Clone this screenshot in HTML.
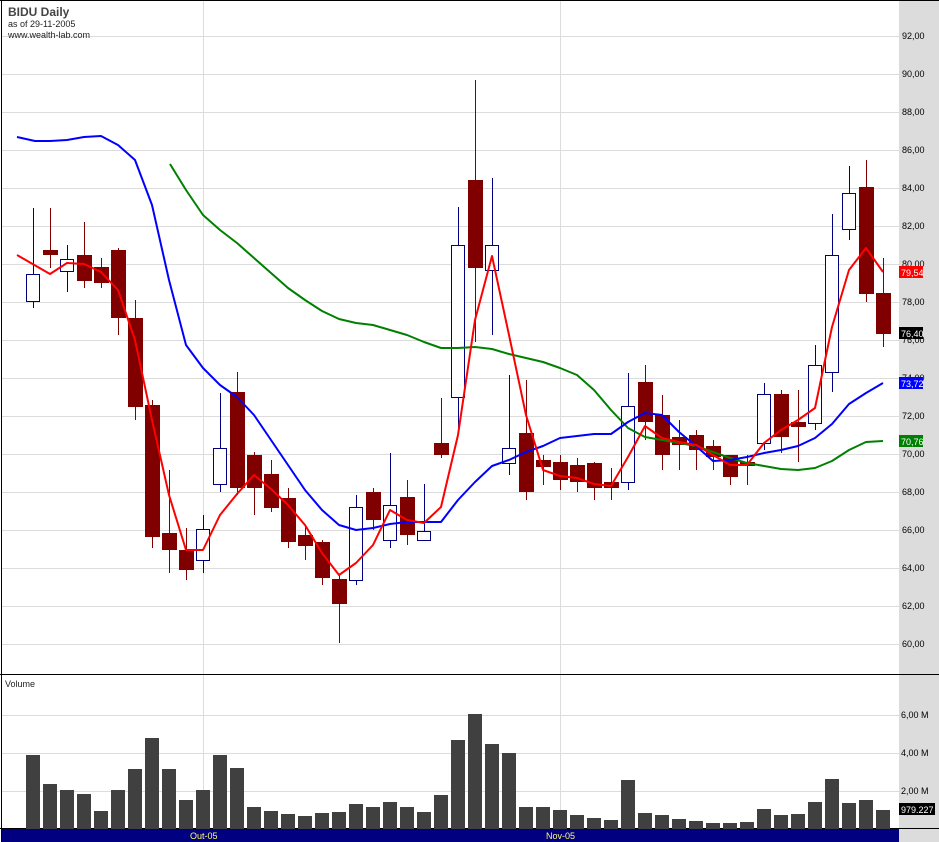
<!DOCTYPE html>
<html><head><meta charset="utf-8"><style>
body{margin:0;background:#fff;}
svg{display:block;font-family:"Liberation Sans",sans-serif;}
</style></head><body>
<svg width="939" height="842" viewBox="0 0 939 842" xmlns="http://www.w3.org/2000/svg" shape-rendering="crispEdges">
<rect x="0" y="0" width="939" height="842" fill="#fff"/>
<rect x="899" y="0" width="40" height="842" fill="#dcdcdc"/>
<g stroke="#dcdcdc" stroke-width="1">
<line x1="2" y1="36.5" x2="899" y2="36.5"/><line x1="2" y1="74.5" x2="899" y2="74.5"/><line x1="2" y1="112.5" x2="899" y2="112.5"/><line x1="2" y1="150.5" x2="899" y2="150.5"/><line x1="2" y1="188.5" x2="899" y2="188.5"/><line x1="2" y1="226.5" x2="899" y2="226.5"/><line x1="2" y1="264.5" x2="899" y2="264.5"/><line x1="2" y1="302.5" x2="899" y2="302.5"/><line x1="2" y1="340.5" x2="899" y2="340.5"/><line x1="2" y1="378.5" x2="899" y2="378.5"/><line x1="2" y1="416.5" x2="899" y2="416.5"/><line x1="2" y1="454.5" x2="899" y2="454.5"/><line x1="2" y1="492.5" x2="899" y2="492.5"/><line x1="2" y1="530.5" x2="899" y2="530.5"/><line x1="2" y1="568.5" x2="899" y2="568.5"/><line x1="2" y1="606.5" x2="899" y2="606.5"/><line x1="2" y1="644.5" x2="899" y2="644.5"/>
<line x1="2" y1="715.5" x2="899" y2="715.5"/><line x1="2" y1="753.5" x2="899" y2="753.5"/><line x1="2" y1="791.5" x2="899" y2="791.5"/>
<line x1="203.5" y1="0" x2="203.5" y2="829"/><line x1="560.5" y1="0" x2="560.5" y2="829"/>
</g>
<line x1="1.5" y1="0" x2="1.5" y2="842" stroke="#000"/>
<line x1="0" y1="0.5" x2="939" y2="0.5" stroke="#000"/>
<line x1="0" y1="674.5" x2="939" y2="674.5" stroke="#000"/>
<line x1="0" y1="828.5" x2="939" y2="828.5" stroke="#000"/>
<text x="8" y="16" font-size="12" font-weight="bold" fill="#444">BIDU Daily</text>
<text x="8" y="27" font-size="9" fill="#222">as of 29-11-2005</text>
<text x="8" y="38" font-size="9" fill="#222">www.wealth-lab.com</text>
<text x="5" y="687" font-size="9" fill="#222">Volume</text>
<g font-size="9" fill="#000">
<text x="902" y="39">92,00</text><text x="902" y="77">90,00</text><text x="902" y="115">88,00</text><text x="902" y="153">86,00</text><text x="902" y="191">84,00</text><text x="902" y="229">82,00</text><text x="902" y="267">80,00</text><text x="902" y="305">78,00</text><text x="902" y="343">76,00</text><text x="902" y="381">74,00</text><text x="902" y="419">72,00</text><text x="902" y="457">70,00</text><text x="902" y="495">68,00</text><text x="902" y="533">66,00</text><text x="902" y="571">64,00</text><text x="902" y="609">62,00</text><text x="902" y="647">60,00</text>
<text x="901" y="718">6,00 M</text><text x="901" y="756">4,00 M</text><text x="901" y="794">2,00 M</text>
</g>
<g id="vol" fill="#404040">
<rect x="26" y="755" width="14" height="74"/><rect x="43" y="784" width="14" height="45"/><rect x="60" y="790" width="14" height="39"/><rect x="77" y="794" width="14" height="35"/><rect x="94" y="811" width="14" height="18"/><rect x="111" y="790" width="14" height="39"/><rect x="128" y="769" width="14" height="60"/><rect x="145" y="738" width="14" height="91"/><rect x="162" y="769" width="14" height="60"/><rect x="179" y="800" width="14" height="29"/><rect x="196" y="790" width="14" height="39"/><rect x="213" y="755" width="14" height="74"/><rect x="230" y="768" width="14" height="61"/><rect x="247" y="807" width="14" height="22"/><rect x="264" y="811" width="14" height="18"/><rect x="281" y="814" width="14" height="15"/><rect x="298" y="816" width="14" height="13"/><rect x="315" y="813" width="14" height="16"/><rect x="332" y="812" width="14" height="17"/><rect x="349" y="804" width="14" height="25"/><rect x="366" y="807" width="14" height="22"/><rect x="383" y="802" width="14" height="27"/><rect x="400" y="807" width="14" height="22"/><rect x="417" y="812" width="14" height="17"/><rect x="434" y="795" width="14" height="34"/><rect x="451" y="740" width="14" height="89"/><rect x="468" y="714" width="14" height="115"/><rect x="485" y="744" width="14" height="85"/><rect x="502" y="753" width="14" height="76"/><rect x="519" y="807" width="14" height="22"/><rect x="536" y="807" width="14" height="22"/><rect x="553" y="810" width="14" height="19"/><rect x="570" y="815" width="14" height="14"/><rect x="587" y="818" width="14" height="11"/><rect x="604" y="820" width="14" height="9"/><rect x="621" y="780" width="14" height="49"/><rect x="638" y="813" width="14" height="16"/><rect x="655" y="815" width="14" height="14"/><rect x="672" y="819" width="14" height="10"/><rect x="689" y="821" width="14" height="8"/><rect x="706" y="823" width="14" height="6"/><rect x="723" y="823" width="14" height="6"/><rect x="740" y="822" width="14" height="7"/><rect x="757" y="809" width="14" height="20"/><rect x="774" y="815" width="14" height="14"/><rect x="791" y="814" width="14" height="15"/><rect x="808" y="802" width="14" height="27"/><rect x="825" y="779" width="14" height="50"/><rect x="842" y="803" width="14" height="26"/><rect x="859" y="800" width="14" height="29"/><rect x="876" y="810" width="14" height="19"/>
</g>
<rect x="2" y="829" width="897" height="13" fill="#000080"/>
<text x="190" y="839" font-size="9" fill="#ffff66">Out-05</text>
<text x="546" y="839" font-size="9" fill="#ffff66">Nov-05</text>
<rect x="899" y="803" width="36" height="12" fill="#000"/><text x="901" y="813" font-size="9" fill="#fff">979.227</text>
<g stroke="#800000" stroke-width="1">
<line x1="33.5" y1="208" x2="33.5" y2="308" stroke="#000080"/><line x1="50.5" y1="208" x2="50.5" y2="268"/><line x1="67.5" y1="245" x2="67.5" y2="292" stroke="#000080"/><line x1="84.5" y1="222" x2="84.5" y2="288"/><line x1="101.5" y1="258" x2="101.5" y2="288"/><line x1="118.5" y1="248" x2="118.5" y2="335"/><line x1="135.5" y1="300" x2="135.5" y2="420"/><line x1="152.5" y1="400" x2="152.5" y2="548"/><line x1="169.5" y1="470" x2="169.5" y2="573"/><line x1="186.5" y1="528" x2="186.5" y2="580"/><line x1="203.5" y1="515" x2="203.5" y2="573" stroke="#000080"/><line x1="220.5" y1="393" x2="220.5" y2="492" stroke="#000080"/><line x1="237.5" y1="372" x2="237.5" y2="495"/><line x1="254.5" y1="452" x2="254.5" y2="515"/><line x1="271.5" y1="460" x2="271.5" y2="512"/><line x1="288.5" y1="488" x2="288.5" y2="548"/><line x1="305.5" y1="525" x2="305.5" y2="560"/><line x1="322.5" y1="540" x2="322.5" y2="585"/><line x1="339.5" y1="574" x2="339.5" y2="643"/><line x1="356.5" y1="495" x2="356.5" y2="585" stroke="#000080"/><line x1="373.5" y1="488" x2="373.5" y2="530"/><line x1="390.5" y1="453" x2="390.5" y2="548" stroke="#000080"/><line x1="407.5" y1="480" x2="407.5" y2="545"/><line x1="424.5" y1="484" x2="424.5" y2="540" stroke="#000080"/><line x1="441.5" y1="398" x2="441.5" y2="458"/><line x1="458.5" y1="207" x2="458.5" y2="432" stroke="#000080"/><line x1="475.5" y1="80" x2="475.5" y2="342"/><line x1="492.5" y1="178" x2="492.5" y2="335" stroke="#000080"/><line x1="509.5" y1="375" x2="509.5" y2="475" stroke="#000080"/><line x1="526.5" y1="380" x2="526.5" y2="500"/><line x1="543.5" y1="455" x2="543.5" y2="485"/><line x1="560.5" y1="455" x2="560.5" y2="490"/><line x1="577.5" y1="458" x2="577.5" y2="492"/><line x1="594.5" y1="462" x2="594.5" y2="500"/><line x1="611.5" y1="468" x2="611.5" y2="500"/><line x1="628.5" y1="373" x2="628.5" y2="490" stroke="#000080"/><line x1="645.5" y1="365" x2="645.5" y2="440"/><line x1="662.5" y1="395" x2="662.5" y2="470"/><line x1="679.5" y1="420" x2="679.5" y2="470"/><line x1="696.5" y1="430" x2="696.5" y2="470"/><line x1="713.5" y1="440" x2="713.5" y2="470"/><line x1="730.5" y1="455" x2="730.5" y2="485"/><line x1="747.5" y1="455" x2="747.5" y2="485"/><line x1="764.5" y1="383" x2="764.5" y2="450" stroke="#000080"/><line x1="781.5" y1="390" x2="781.5" y2="453"/><line x1="798.5" y1="390" x2="798.5" y2="462"/><line x1="815.5" y1="345" x2="815.5" y2="430" stroke="#000080"/><line x1="832.5" y1="214" x2="832.5" y2="392" stroke="#000080"/><line x1="849.5" y1="166" x2="849.5" y2="240" stroke="#000080"/><line x1="866.5" y1="160" x2="866.5" y2="302"/><line x1="883.5" y1="258" x2="883.5" y2="347"/>
</g>
<g fill="#800000">
<rect x="43" y="250" width="15" height="5"/><rect x="77" y="255" width="15" height="26"/><rect x="94" y="267" width="15" height="16"/><rect x="111" y="250" width="15" height="68"/><rect x="128" y="318" width="15" height="89"/><rect x="145" y="405" width="15" height="132"/><rect x="162" y="533" width="15" height="17"/><rect x="179" y="550" width="15" height="20"/><rect x="230" y="392" width="15" height="96"/><rect x="247" y="455" width="15" height="33"/><rect x="264" y="474" width="15" height="34"/><rect x="281" y="498" width="15" height="44"/><rect x="298" y="535" width="15" height="11"/><rect x="315" y="542" width="15" height="36"/><rect x="332" y="579" width="15" height="25"/><rect x="366" y="492" width="15" height="28"/><rect x="400" y="497" width="15" height="38"/><rect x="434" y="443" width="15" height="12"/><rect x="468" y="180" width="15" height="88"/><rect x="519" y="433" width="15" height="59"/><rect x="536" y="460" width="15" height="7"/><rect x="553" y="462" width="15" height="18"/><rect x="570" y="465" width="15" height="17"/><rect x="587" y="463" width="15" height="25"/><rect x="604" y="482" width="15" height="6"/><rect x="638" y="382" width="15" height="40"/><rect x="655" y="415" width="15" height="40"/><rect x="672" y="437" width="15" height="8"/><rect x="689" y="435" width="15" height="15"/><rect x="706" y="446" width="15" height="11"/><rect x="723" y="455" width="15" height="22"/><rect x="740" y="462" width="15" height="4"/><rect x="774" y="394" width="15" height="43"/><rect x="791" y="422" width="15" height="5"/><rect x="859" y="187" width="15" height="107"/><rect x="876" y="293" width="15" height="41"/>
</g>
<g fill="#fff" stroke="#000080" stroke-width="1">
<rect x="26.5" y="274.5" width="13" height="27"/><rect x="60.5" y="259.5" width="13" height="12"/><rect x="196.5" y="529.5" width="13" height="31"/><rect x="213.5" y="448.5" width="13" height="36"/><rect x="349.5" y="507.5" width="13" height="73"/><rect x="383.5" y="505.5" width="13" height="35"/><rect x="417.5" y="531.5" width="13" height="9"/><rect x="451.5" y="245.5" width="13" height="152"/><rect x="485.5" y="245.5" width="13" height="25"/><rect x="502.5" y="448.5" width="13" height="15"/><rect x="621.5" y="406.5" width="13" height="76"/><rect x="757.5" y="394.5" width="13" height="49"/><rect x="808.5" y="365.5" width="13" height="58"/><rect x="825.5" y="255.5" width="13" height="117"/><rect x="842.5" y="193.5" width="13" height="36"/>
</g>
<g fill="none" stroke-width="2" shape-rendering="auto" stroke-linejoin="round">
<polyline stroke="#008000" points="170,164 186,190 203,215 220,230 237,243 254,258 271,273 288,288 305,300 322,311 339,319 356,323 373,325 390,330 407,335 424,342 441,348 458,348 475,347 492,349 509,354 526,358 543,362 560,368 577,375 594,390 611,410 628,428 645,437 662,440 679,443 696,446 713,452 730,458 747,463 764,466 781,469 798,470 815,468 832,461 849,450 866,442 883,441"/>
<polyline stroke="#0000ff" points="17,137 35,141 50,141 67,140 84,137 101,136 118,145 135,160 152,205 169,280 186,345 203,368 220,385 237,397 254,415 271,440 288,465 305,490 322,510 339,525 356,530 373,528 390,524 407,522 424,522 441,522 458,500 475,482 492,466 509,460 526,452 543,446 560,438 577,436 594,434 611,434 628,422 645,413 662,415 679,432 696,446 713,461 730,460 747,457 764,453 781,450 798,446 815,438 832,424 849,404 866,393 883,383"/>
<polyline stroke="#ff0000" points="17,255 50,274 67,263 84,264 101,272 118,290 135,340 152,420 169,495 186,550 203,550 220,515 237,494 254,475 271,489 288,505 305,525 322,553 339,575 356,563 373,545 390,510 407,520 424,523 441,507 458,435 475,320 492,256 509,335 526,415 543,470 560,476 577,478 594,484 611,486 628,457 645,426 662,438 679,442 696,445 713,455 730,465 747,465 764,443 781,430 798,420 815,408 832,327 849,270 866,248 883,272"/>
</g>
<rect x="899" y="266" width="24" height="12" fill="#ff0000"/><text x="901" y="276" font-size="9" fill="#fff">79,54</text>
<rect x="899" y="327" width="24" height="12" fill="#000"/><text x="901" y="337" font-size="9" fill="#fff">76,40</text>
<rect x="899" y="377" width="24" height="12" fill="#0000ff"/><text x="901" y="387" font-size="9" fill="#fff">73,72</text>
<rect x="899" y="435" width="24" height="12" fill="#008000"/><text x="901" y="445" font-size="9" fill="#fff">70,76</text>
</svg>
</body></html>
